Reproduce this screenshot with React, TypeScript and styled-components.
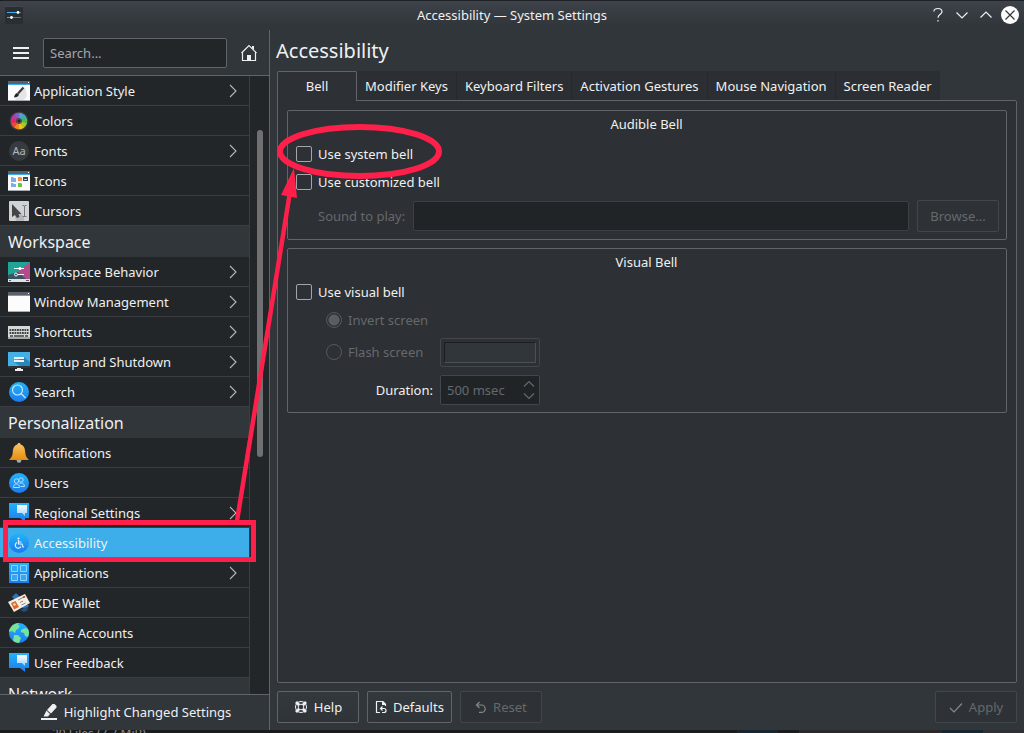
import React from "react";
import styled, { createGlobalStyle, css } from "styled-components";

const color = {
  window: "#31363b",
  view: "#232629",
  pane: "#2d3034",
  line: "#616569",
  divider: "#3a3e42",
  faint: "#43474b",
  text: "#eff0f1",
  dim: "#65696d",
  accent: "#3daee9",
  mark: "#ff1f4b",
};

const GlobalStyle = createGlobalStyle`
  * { box-sizing: border-box; }
  body { margin: 0; background: #1b1b1d; }
  body, button, input {
    font-family: "Noto Sans", "Open Sans", sans-serif;
    font-size: 13px;
    line-height: 18px;
    color: ${color.text};
  }
  button { margin: 0; padding: 0; border: 0; background: none; }
  svg { display: block; flex: none; }
`;

const Desktop = styled.div`
  position: relative;
  display: flex;
  flex-direction: column;
  height: 100vh;
  overflow: hidden;
`;

const Window = styled.div`
  flex: 1;
  min-height: 0;
  display: flex;
  flex-direction: column;
  background: ${color.window};
  border-top: 1px solid #1f2124;
  border-radius: 4px 4px 0 0;
`;

const TitleBar = styled.header`
  flex: none;
  display: grid;
  grid-template-columns: 1fr auto 1fr;
  align-items: center;
  height: 29px;
  padding: 0 5px 2px;
  background: linear-gradient(#3d434a, #31363b 24px);
`;

const WindowTitle = styled.div`
  text-align: center;
`;

const WindowButtons = styled.div`
  display: flex;
  justify-content: flex-end;
  gap: 6px;
`;

const Columns = styled.div`
  flex: 1;
  min-height: 0;
  display: flex;
`;

const Sidebar = styled.nav`
  flex: none;
  width: 270px;
  display: flex;
  flex-direction: column;
  border-right: 1px solid ${color.line};
`;

const SidebarHeader = styled.div`
  flex: none;
  display: flex;
  align-items: center;
  gap: 13px;
  height: 46px;
  padding: 0 12px;
  border-bottom: 1px solid ${color.line};
`;

const SearchBox = styled.input`
  flex: 1;
  min-width: 0;
  height: 30px;
  padding: 0 6px;
  border: 1px solid ${color.line};
  border-radius: 2px;
  background: ${color.view};
  &::placeholder { color: #a4a7a9; opacity: 1; }
`;

const ListArea = styled.div`
  flex: 1;
  min-height: 0;
  display: flex;
  overflow: hidden;
  background: ${color.view};
`;

const List = styled.div`
  flex: 1;
  height: max-content;
  border-right: 1px solid ${color.divider};
`;

const SectionTitle = styled.h2`
  margin: 0;
  height: 31px;
  padding: 0 8px;
  font-size: 16px;
  line-height: 32px;
  font-weight: 400;
  background: ${color.window};
`;

const Items = styled.ul`
  margin: 0;
  padding: 0;
  list-style: none;
`;

const Entry = styled.a<{ $current?: boolean }>`
  display: flex;
  align-items: center;
  gap: 4px;
  height: 30px;
  padding: 0 8px;
  border-bottom: 1px solid ${color.divider};
  color: ${color.text};
  text-decoration: none;
  ${(p) => p.$current && css`background: ${color.accent};`}
`;

const EntryLabel = styled.span`
  flex: 1;
  white-space: nowrap;
`;

const ScrollTrack = styled.div`
  flex: none;
  width: 19px;
  padding: 54px 6px 0 7px;
`;

const ScrollThumb = styled.div`
  height: 327px;
  border-radius: 3px;
  background: #6e7072;
`;

const HighlightButton = styled.button`
  flex: none;
  display: flex;
  align-items: center;
  justify-content: center;
  gap: 7px;
  height: 36px;
  padding: 0 0 2px 3px;
  border-top: 1px solid ${color.line};
`;

const Main = styled.main`
  flex: 1;
  min-width: 0;
  display: flex;
  flex-direction: column;
  padding: 0 7px 7px;
`;

const PageTitle = styled.h1`
  margin: 0;
  height: 41px;
  font-size: 20px;
  line-height: 42px;
  font-weight: 400;
  margin-left: -1px;
`;

const Tabs = styled.div`
  display: flex;
  flex: none;
  height: 30px;
  margin-bottom: -1px;
  z-index: 1;
`;

const Tab = styled.button<{ $active?: boolean }>`
  height: 29px;
  padding: 0 8px;
  white-space: nowrap;
  background: #2b2f33;
  border-right: 1px solid #26292d;
  &:last-child { border-right: 0; border-radius: 0 2px 0 0; }
  ${(p) =>
    p.$active &&
    css`
      width: 80px;
      height: 30px;
      padding-bottom: 2px;
      background: ${color.pane};
      border: 1px solid ${color.line};
      border-bottom: 0;
      border-radius: 2px 2px 0 0;
    `}
`;

const Pane = styled.section`
  flex: 1;
  min-height: 0;
  display: flex;
  flex-direction: column;
  gap: 8px;
  padding: 9px;
  background: ${color.pane};
  border: 1px solid ${color.line};
  border-radius: 0 2px 2px 2px;
`;

const Group = styled.div`
  display: flex;
  flex-direction: column;
  padding: 4px 7px 7px 8px;
  border: 1px solid ${color.line};
  border-radius: 2px;
`;

const GroupTitle = styled.h3`
  margin: 0 0 9px;
  height: 18px;
  padding-right: 2px;
  line-height: 18px;
  font-size: 13px;
  font-weight: 400;
  text-align: center;
`;

const Check = styled.label`
  display: flex;
  align-items: center;
  gap: 6px;
  height: 24px;
  margin-bottom: 4px;
`;

const Tick = styled.input`
  appearance: none;
  flex: none;
  width: 16px;
  height: 16px;
  margin: 0;
  border: 1px solid #a3a6a8;
  border-radius: 2px;
  background: ${color.pane};
`;

const SoundRow = styled.div`
  display: flex;
  align-items: center;
  gap: 8px;
  height: 32px;
  margin: 2px 0 0 22px;
  color: ${color.dim};
`;

const SoundField = styled.input`
  flex: 1;
  min-width: 0;
  height: 30px;
  border: 1px solid #3c4044;
  border-radius: 2px;
  background: #202427;
`;

const PushButton = styled.button`
  flex: none;
  display: flex;
  align-items: center;
  justify-content: center;
  gap: 6px;
  min-width: 82px;
  height: 32px;
  padding: 0 7px;
  border: 1px solid ${color.line};
  border-radius: 2px;
  background: linear-gradient(#33383d, #2f3439);
  &:disabled {
    color: ${color.dim};
    border-color: ${color.faint};
    background: #2e3236;
  }
`;

const VisualGrid = styled.div`
  display: grid;
  grid-template-columns: 107px 100px;
  column-gap: 7px;
  grid-template-rows: 24px 40px 36px;
  align-items: center;
  margin: 0 0 -3px 30px;
`;

const Radio = styled.label`
  display: flex;
  align-items: center;
  gap: 6px;
  grid-column: 1;
  white-space: nowrap;
  color: ${color.dim};
`;

const Dot = styled.input`
  appearance: none;
  flex: none;
  width: 16px;
  height: 16px;
  margin: 0;
  border: 1px solid #55595d;
  border-radius: 50%;
  &:checked { background: radial-gradient(circle, #5a5e62 5px, transparent 6px); }
`;

const SwatchButton = styled.button`
  height: 29px;
  padding: 3px;
  border: 1px solid ${color.faint};
  border-radius: 2px;
`;

const Swatch = styled.span`
  display: block;
  height: 21px;
  border: 1px solid;
  border-color: #1c1f21 #4d5155 #4d5155 #1c1f21;
  background: ${color.window};
`;

const DurationLabel = styled.label`
  text-align: right;
`;

const Spin = styled.div`
  display: flex;
  align-items: center;
  height: 30px;
  padding: 0 4px 0 6px;
  border: 1px solid ${color.faint};
  border-radius: 2px;
  background: #202427;
`;

const SpinField = styled.input`
  flex: 1;
  min-width: 0;
  padding: 0;
  border: 0;
  background: none;
  color: ${color.dim};
`;

const Footer = styled.footer`
  flex: none;
  display: flex;
  gap: 8px;
  margin-top: 8px;
`;

const Spacer = styled.span`
  flex: 1;
`;

const DesktopEdge = styled.div`
  flex: none;
  height: 3px;
  padding-left: 52px;
  overflow: hidden;
  font-size: 12px;
  line-height: 8px;
  color: #8d8d8f;
  background: linear-gradient(90deg, #1b1b1d 72%, #152630 72% 76%, #1b1b1d 76% 78%, #2c2829 78% 92%, #152630 92% 96%, #2f3033 96%);
`;

const Overlay = styled.svg`
  position: absolute;
  left: 0;
  top: 0;
  pointer-events: none;
`;

const Stroke = (p: { d: string; size?: number; w?: number; stroke?: string }) => (
  <svg width={p.size ?? 18} height={p.size ?? 18} viewBox={`0 0 ${p.size ?? 18} ${p.size ?? 18}`} fill="none" stroke={p.stroke ?? color.text} strokeWidth={p.w ?? 1.2}>
    <path d={p.d} />
  </svg>
);

const WindowFrame = ({ children }: { children?: React.ReactNode }) => (
  <>
    <path fill="#fcfcfc" d="M0 1h22v20H0z" />
    <path fill="#5a616b" d="M0 1h22v3H0z" />
    <path fill="#3daee9" d="M0 4h22v1H0z" />
    <path fill="#fcfcfc" d="M20 2h1v1h-1z" />
    <path fill="#a9adb0" d="M0 20h22v1H0z" />
    {children}
  </>
);

const Disc = () => <circle cx="11" cy="11" r="10" fill="url(#blue)" />;

const Bubble = () => (
  <>
    <path fill="url(#blue)" d="M1 1h20v15h-4v4l-5-4H1z" />
    <path fill="url(#pale)" d="M9 3h10v8h-2v3l-3-3H9z" />
  </>
);

const Wheel = () => {
  const hues = ["#5c9fd4", "#38b2a0", "#54b848", "#a4c92a", "#e8c51c", "#f08a1d", "#ee4a2c", "#ec2467", "#b63c9b", "#7b63c8"];
  const at = (i: number) => {
    const a = (i / hues.length) * Math.PI * 2 - Math.PI / 2;
    return `${11 + 5.5 * Math.cos(a)} ${11 + 5.5 * Math.sin(a)}`;
  };
  return (
    <>
      <circle cx="11" cy="11" r="9.500" fill="#3b3d43" />
      {hues.map((h, i) => (
        <path key={h} d={`M${at(i)}A5.5 5.5 0 0 1 ${at(i + 1.1)}`} stroke={h} strokeWidth="5.500" fill="none" />
      ))}
      <circle cx="11" cy="11" r="2.800" fill="#4b4c50" />
      <circle cx="11" cy="11" r="1.300" fill="#24262a" />
    </>
  );
};

const art: Record<string, React.ReactNode> = {
  style: (
    <WindowFrame>
      <path d="M9 16l8-9 2 9-3 4H7z" fill="#e3e5e6" />
      <path d="M6 17.500c.5-2.500 1.500-4 3-4.500l2 1.500c-.5 2-2.500 3-5 3z" fill="#232629" />
      <path d="M10 13.500l5.500-6" stroke="#3a3c3e" strokeWidth="2.200" />
    </WindowFrame>
  ),
  colors: <Wheel />,
  fonts: (
    <>
      <circle cx="11" cy="11" r="10" fill="#373b40" />
      <text x="11" y="15" textAnchor="middle" fontSize="11" fill="#b4b6b8" stroke="none" fontFamily="Noto Sans">Aa</text>
    </>
  ),
  icons: (
    <WindowFrame>
      <path fill="#7eaee6" d="M3 7h2l1 1h2v4H3zM3 13h2l1 1h2v3H3z" />
      <path fill="#f78c4b" d="M10 7h3l1 1v3h-4z" />
      <path fill="#5fca3c" d="M10 13h3l1 1v3h-4z" />
      <path fill="#34495e" d="M15 7h5v4h-5z" />
      <path fill="#b9d5e8" d="M16 9h3v1h-3z" />
    </WindowFrame>
  ),
  cursors: (
    <>
      <rect x="1" y="1" width="20" height="20" rx="1" fill="#cfd3d4" />
      <path d="M5 5l11 12v4H8z" fill="#b4b8ba" />
      <path d="M4 4v13l3-2 2 3 2.500-1-1-3h3z" fill="#454545" />
      <path d="M14.500 5.500h1.500l.5.500.5-.5h1.500M16.500 6v10M14.500 16.500h4" stroke="#777" fill="none" />
    </>
  ),
  behavior: (
    <>
      <path fill="#b64b8b" d="M0 1h22v17H0z" />
      <path fill="#1fa596" d="M0 1h22L0 18z" />
      <path fill="#3a5463" d="M0 18v-4l10-3 8 7z" />
      <path fill="#dfe1e2" d="M0 18h22v3H0z" />
      <path fill="#55595c" d="M1 19h2v1H1zM18 19h3v1h-3z" />
      <path d="M6 7.500h10M8 13.500h8" stroke="#fcfcfc" />
      <circle cx="12" cy="7.500" r="1.500" fill="#fcfcfc" />
      <circle cx="8" cy="13.500" r="1.500" fill="#35535f" stroke="#fcfcfc" />
    </>
  ),
  window: <WindowFrame />,
  keyboard: (
    <>
      <path fill="#d4d8d7" d="M0 5h22v13H0z" />
      <path fill="#a5aba9" d="M0 16h22v2H0z" />
      <path d="M1.500 9h19M1.500 12h19" stroke="#3b4544" strokeWidth="2" strokeDasharray="1.800 .7" />
      <path d="M2 15h3m1 0h10m1 0h3" stroke="#3b4544" strokeWidth="1.500" />
    </>
  ),
  startup: (
    <>
      <path fill="#44b0e5" d="M0 1h22v14H0z" />
      <path fill="#2988b9" d="M16 6l6 5v4H12l-6-4z" />
      <path fill="#2f3438" d="M0 15h22v2H0z" />
      <path fill="#eceeef" d="M9 17h4v1h2v2H7v-2h2z" />
      <path d="M6 7h10M6 10h10" stroke="#eef1f3" strokeWidth="2" />
    </>
  ),
  search: (
    <>
      <Disc />
      <circle cx="9.500" cy="9" r="5" fill="none" stroke="#c3e4fb" strokeWidth="1.200" />
      <path d="M13 12.500l4.500 4.500" stroke="#c3e4fb" strokeWidth="1.200" />
    </>
  ),
  bell: (
    <>
      <circle cx="11" cy="18.500" r="2.300" fill="#a8acae" />
      <path fill="url(#gold)" d="M11 1c1 0 1.500.7 1.700 1.500C16 3.500 17 6.500 17.200 10c.2 4 1.300 5.500 3.800 8H1c2.500-2.500 3.600-4 3.800-8 .2-3.500 1.200-6.500 4.500-7.500C9.500 1.700 10 1 11 1z" />
    </>
  ),
  users: (
    <>
      <Disc />
      <g fill="none" stroke="#b5dcfb">
        <circle cx="13" cy="8" r="2.200" />
        <circle cx="8.500" cy="9" r="2.200" />
        <path d="M5.500 15.500c0-2 1-3.500 3-3.500s3 1.500 3 3.500zM11.500 12c1-1.500 4.500-2 5 2.500h-4" />
      </g>
    </>
  ),
  region: <Bubble />,
  access: (
    <>
      <Disc />
      <g fill="none" stroke="#dff1fe" strokeWidth="1.200">
        <path d="M10.500 8v4h3.500l1 3h1M11 10h2.500M9 10.500a3 3 0 1 0 4 4" />
      </g>
      <circle cx="10.500" cy="6.500" r="1.100" fill="#dff1fe" />
    </>
  ),
  apps: (
    <>
      <path fill="url(#blue)" d="M1 1h20v20H1z" />
      <path d="M3.500 3.500h6v6h-6zM12.500 3.500h6v6h-6zM3.500 12.500h6v6h-6zM12.500 12.500h6v6h-6z" fill="#35a6f3" stroke="#8fd3fb" />
    </>
  ),
  wallet: (
    <>
      <path fill="#2d73b5" d="M4 5l4-4 13 13-4 4z" />
      <path fill="#204f80" d="M12 18l7-3 1 3-4 2z" />
      <path fill="#f4eee4" d="M0 10l17-8 5 9L6 20z" />
      <path fill="#e06a2c" d="M3 11l4.500-2 3.500 6-5 2.500z" />
      <circle cx="6.500" cy="12.500" r="1.300" fill="#f6dac0" />
      <path d="M10 8l5-2.500M12 10.500l3-1.500M13.500 13l4-2" stroke="#8c8782" />
      <path d="M15 5.500l2-1" stroke="#c0392b" strokeWidth="1.500" />
    </>
  ),
  globe: (
    <>
      <Disc />
      <path fill="#76e29a" d="M3 5c2-3 5-4 8-4l-1 2 2 1-2 3-2 1-1 3-3-2-3 1c0-2 .7-4 2-5zM13 8l4-2 3 1c1.300 2.500 1.300 5 0 8l-3-1-1-3-3-1zM6 13l4 0 3 3-2 5c-3 0-5-1-6-2.500z" />
    </>
  ),
  feedback: <Bubble />,
};

const Art = ({ name }: { name: string }) => (
  <svg width="22" height="22" viewBox="0 0 22 22" aria-hidden="true">{art[name]}</svg>
);

const Gradients = () => (
  <defs>
    <linearGradient id="blue" x1="0" y1="0" x2="0" y2="1">
      <stop offset="0" stopColor="#21b4fa" />
      <stop offset="1" stopColor="#1d7bee" />
    </linearGradient>
    <linearGradient id="pale" x1="0" y1="0" x2="0" y2="1">
      <stop offset="0" stopColor="#ffffff" />
      <stop offset="1" stopColor="#9bd2fa" />
    </linearGradient>
    <linearGradient id="gold" x1="0" y1="0" x2="0" y2="1">
      <stop offset="0" stopColor="#fbc567" />
      <stop offset="1" stopColor="#e58d0b" />
    </linearGradient>
  </defs>
);

type Item = { icon: string; label: string; more?: boolean; current?: boolean };

const sections: { title?: string; items: Item[] }[] = [
  {
    items: [
      { icon: "style", label: "Application Style", more: true },
      { icon: "colors", label: "Colors" },
      { icon: "fonts", label: "Fonts", more: true },
      { icon: "icons", label: "Icons" },
      { icon: "cursors", label: "Cursors" },
    ],
  },
  {
    title: "Workspace",
    items: [
      { icon: "behavior", label: "Workspace Behavior", more: true },
      { icon: "window", label: "Window Management", more: true },
      { icon: "keyboard", label: "Shortcuts", more: true },
      { icon: "startup", label: "Startup and Shutdown", more: true },
      { icon: "search", label: "Search", more: true },
    ],
  },
  {
    title: "Personalization",
    items: [
      { icon: "bell", label: "Notifications" },
      { icon: "users", label: "Users" },
      { icon: "region", label: "Regional Settings", more: true },
      { icon: "access", label: "Accessibility", current: true },
      { icon: "apps", label: "Applications", more: true },
      { icon: "wallet", label: "KDE Wallet" },
      { icon: "globe", label: "Online Accounts" },
      { icon: "feedback", label: "User Feedback" },
    ],
  },
  { title: "Network", items: [] },
];

const tabs = ["Bell", "Modifier Keys", "Keyboard Filters", "Activation Gestures", "Mouse Navigation", "Screen Reader"];

const AppIcon = () => (
  <svg width="18" height="18" viewBox="0 0 18 18" aria-hidden="true">
    <path fill="#2a2e32" d="M0 0h18v18H0z" />
    <path fill="#42474c" d="M0 0h18v1H0z" />
    <path d="M2 6.500h11" stroke="#3daee9" />
    <path d="M14 6.500h2M7 11.500h9" stroke="#6d7276" />
    <path d="M2 11.500h4" stroke="#3daee9" />
    <circle cx="13" cy="6.500" r="1.400" fill="#fcfcfc" />
    <circle cx="6.500" cy="11.500" r="1.400" fill="#fcfcfc" />
  </svg>
);

const HomeIcon = () => (
  <svg width="17" height="18" viewBox="0 0 17 18" aria-hidden="true">
    <path d="M1.500 9L9 1.500 16.500 9M2.500 8.500v8h13v-8" fill="none" stroke={color.text} strokeWidth="1.200" />
    <path d="M12 2h2v4l-2-2zM7 11h4v6H7z" fill={color.text} />
  </svg>
);

const HelpIcon = () => (
  <svg width="14" height="14" viewBox="0 0 14 14" fill="none" stroke={color.text} aria-hidden="true">
    <circle cx="7" cy="7" r="5.500" />
    <circle cx="7" cy="7" r="2.800" />
    <path d="M2 2l3 3M12 2L9 5M2 12l3-3M12 12L9 9" strokeWidth="2.800" />
  </svg>
);

const DefaultsIcon = () => (
  <svg width="12" height="14" viewBox="0 0 12 14" fill="none" stroke={color.text} aria-hidden="true">
    <path d="M5 12.500H1.500v-11h6l3 3V6" strokeWidth="1.200" />
    <path d="M7 1h1l3 3v1H7z" fill={color.text} stroke="none" />
    <path d="M5.500 8.500h3.500a2 2 0 0 1 0 4H7M7.500 6.500l-2 2 2 2" strokeWidth="1.200" />
  </svg>
);

const MarkerIcon = () => (
  <svg width="16" height="16" viewBox="0 0 16 16" aria-hidden="true">
    <path fill={color.text} d="M0 14h16v2H0zM11.500 0h2l2 2v1.500L10 9.500 6 6zM5.500 6.500L9 10l-2 2.500H2.500z" />
  </svg>
);

export default function App() {
  return (
    <Desktop>
      <GlobalStyle />
      <Window>
        <TitleBar>
          <AppIcon />
          <WindowTitle>Accessibility — System Settings</WindowTitle>
          <WindowButtons>
            <button aria-label="What's this">
              <Stroke d="M5 5.500v-.5c0-1.500 1.500-2.500 4-2.500s4 1.200 4 3.200c0 2.500-4 2.800-4 6M9 14v1.500" />
            </button>
            <button aria-label="Minimize"><Stroke d="M3.500 6.500L9 12l5.500-5.500" /></button>
            <button aria-label="Maximize"><Stroke d="M3.500 11.500L9 6l5.500 5.500" /></button>
            <button aria-label="Close">
              <svg width="18" height="18" viewBox="0 0 18 18">
                <circle cx="9" cy="9" r="9" fill="#fcfcfc" />
                <path d="M4.500 4.500l9 9M13.500 4.500l-9 9" stroke="#31363b" strokeWidth="1.200" />
              </svg>
            </button>
          </WindowButtons>
        </TitleBar>

        <Columns>
          <Sidebar aria-label="Settings">
            <SidebarHeader>
              <button aria-label="Menu">
                <svg width="18" height="16" viewBox="0 0 18 16"><path fill={color.text} d="M1 2h16v2H1zM1 7h16v2H1zM1 12h16v2H1z" /></svg>
              </button>
              <SearchBox type="text" aria-label="Search" placeholder="Search..." />
              <button aria-label="Home"><HomeIcon /></button>
            </SidebarHeader>
            <ListArea>
              <List>
                {sections.map((s) => (
                  <React.Fragment key={s.title ?? "Appearance"}>
                    {s.title && <SectionTitle>{s.title}</SectionTitle>}
                    <Items>
                      {s.items.map((i) => (
                        <li key={i.label}>
                          <Entry href="#" $current={i.current}>
                            <Art name={i.icon} />
                            <EntryLabel>{i.label}</EntryLabel>
                            {i.more && <Stroke size={16} w={1.1} stroke="#b5b7b9" d="M5 2l6 6-6 6" />}
                          </Entry>
                        </li>
                      ))}
                    </Items>
                  </React.Fragment>
                ))}
              </List>
              <ScrollTrack><ScrollThumb /></ScrollTrack>
            </ListArea>
            <HighlightButton><MarkerIcon />Highlight Changed Settings</HighlightButton>
          </Sidebar>

          <Main>
            <PageTitle>Accessibility</PageTitle>
            <Tabs role="tablist">
              {tabs.map((t, i) => (
                <Tab key={t} role="tab" aria-selected={i === 0} $active={i === 0}>{t}</Tab>
              ))}
            </Tabs>
            <Pane>
              <Group>
                <GroupTitle>Audible Bell</GroupTitle>
                <Check><Tick type="checkbox" />Use system bell</Check>
                <Check><Tick type="checkbox" />Use customized bell</Check>
                <SoundRow>
                  <label htmlFor="sound">Sound to play:</label>
                  <SoundField id="sound" type="text" disabled />
                  <PushButton disabled>Browse...</PushButton>
                </SoundRow>
              </Group>
              <Group>
                <GroupTitle>Visual Bell</GroupTitle>
                <Check><Tick type="checkbox" />Use visual bell</Check>
                <VisualGrid>
                  <Radio><Dot type="radio" name="visual" defaultChecked disabled />Invert screen</Radio>
                  <Radio><Dot type="radio" name="visual" disabled />Flash screen</Radio>
                  <SwatchButton disabled aria-label="Flash color"><Swatch /></SwatchButton>
                  <DurationLabel htmlFor="duration">Duration:</DurationLabel>
                  <Spin>
                    <SpinField id="duration" type="text" defaultValue="500 msec" disabled />
                    <svg width="12" height="20" viewBox="0 0 12 20" fill="none" stroke="#65696d" strokeWidth="1.200">
                      <path d="M1 6.500l5-5 5 5M1 13.500l5 5 5-5" />
                    </svg>
                  </Spin>
                </VisualGrid>
              </Group>
            </Pane>
            <Footer>
              <PushButton><HelpIcon />Help</PushButton>
              <PushButton><DefaultsIcon />Defaults</PushButton>
              <PushButton disabled>
                <Stroke size={12} stroke="#85888a" d="M4.500 1L1.500 4l3 3M1.500 4h5a3.700 3.700 0 0 1 0 7.400H4" />
                Reset
              </PushButton>
              <Spacer />
              <PushButton disabled>
                <Stroke size={14} stroke="#85888a" d="M1 8l4 4 8-8.500" />
                Apply
              </PushButton>
            </Footer>
          </Main>
        </Columns>
      </Window>
      <DesktopEdge>20 Files (7.7 MiB)</DesktopEdge>

      <Overlay width="460" height="580" viewBox="0 0 460 580" fill="none" stroke={color.mark} aria-hidden="true">
        <Gradients />
        <rect x="5.500" y="522.500" width="248" height="37" strokeWidth="5" />
        <ellipse cx="359.500" cy="151.500" rx="79.500" ry="24.500" strokeWidth="6" />
        <path d="M237 521L289.500 195" strokeWidth="4.500" />
        <path d="M294 168l3 30-16-3z" fill={color.mark} stroke="none" />
      </Overlay>
    </Desktop>
  );
}
